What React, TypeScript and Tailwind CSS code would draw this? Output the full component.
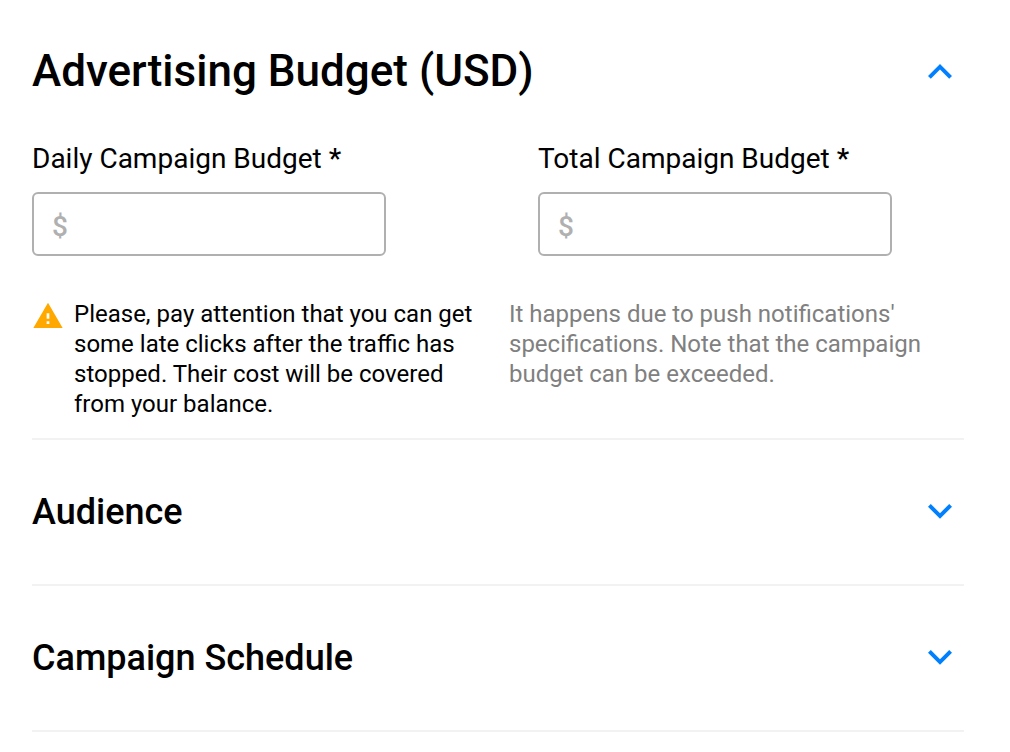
import { useState, type ReactNode } from "react";
import { MdWarning } from "react-icons/md";

type SectionProps = {
  id: string;
  title: string;
  large?: boolean;
  defaultOpen?: boolean;
  children?: ReactNode;
};

function Chevron({ open }: { open: boolean }) {
  return (
    <svg viewBox="0 0 24 16" className="h-4 w-6 fill-[#0080ff]" aria-hidden="true">
      <path
        d={
          open
            ? "M2.8 15.8 12 6.6l9.2 9.2L24 13 12 1 0 13z"
            : "M2.8 0 12 9.2 21.2 0 24 2.8l-12 12-12-12z"
        }
      />
    </svg>
  );
}

function Section({ id, title, large, defaultOpen = false, children }: SectionProps) {
  const [open, setOpen] = useState(defaultOpen);

  return (
    <section className="border-b-2 border-[#f2f2f2]">
      <h2>
        <button
          type="button"
          aria-expanded={open}
          aria-controls={id}
          onClick={() => setOpen(!open)}
          className={
            large
              ? "flex h-[142px] w-full items-center justify-between pr-3 text-left text-[44px] font-medium"
              : "flex h-36 w-full items-center justify-between pr-3 text-left text-4xl font-medium"
          }
        >
          {title}
          <Chevron open={open} />
        </button>
      </h2>
      <div id={id} hidden={!open}>
        {children}
      </div>
    </section>
  );
}

function BudgetField({ id, label }: { id: string; label: string }) {
  return (
    <div>
      <label htmlFor={id} className="block text-[28px] leading-[34px]">
        {label} <span className="font-medium">*</span>
      </label>
      <input
        id={id}
        type="text"
        placeholder="$"
        required
        className="mt-4 h-16 w-full rounded-md border-2 border-[#b0b0b0] px-[18px] pt-1 text-[28px] placeholder:font-medium placeholder:text-[#b0b0b0]"
      />
    </div>
  );
}

export default function App() {
  return (
    <main className="min-h-screen bg-white pr-[46px] pl-8 font-['Roboto',sans-serif] text-black">
      <Section id="budget" title="Advertising Budget (USD)" large defaultOpen>
        <div className="grid grid-cols-2 gap-x-[152px] pr-[72px]">
          <BudgetField id="daily" label="Daily Campaign Budget" />
          <BudgetField id="total" label="Total Campaign Budget" />
        </div>
        <div className="mt-[43px] grid grid-cols-[441px_1fr] gap-9 pb-[19px] text-2xl leading-[30px]">
          <div className="flex gap-2.5">
            <MdWarning className="mt-px size-8 shrink-0 text-[#ffa800]" />
            <p>
              Please, pay attention that you can get some late clicks after the traffic has
              stopped. Their cost will be covered from your balance.
            </p>
          </div>
          <p className="text-[#808080]">
            It happens due to push notifications' specifications. Note that the campaign budget
            can be exceeded.
          </p>
        </div>
      </Section>
      <Section id="audience" title="Audience" />
      <Section id="schedule" title="Campaign Schedule" />
    </main>
  );
}
